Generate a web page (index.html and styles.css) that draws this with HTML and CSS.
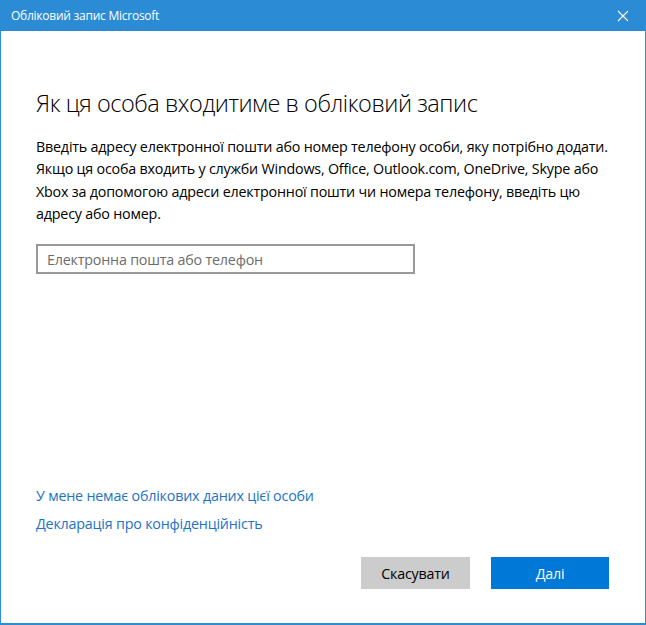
FILE: index.html
```html
<!DOCTYPE html>
<html lang="uk">
<head>
  <meta charset="UTF-8"/>
  <meta name="viewport" content="width=device-width, initial-scale=1.0"/>
  <title>Обліковий запис Microsoft</title>
  <link rel="stylesheet" href="styles.css">
</head>
<body>
  <div class="window">
    <div class="titlebar">
      <span class="title">Обліковий запис Microsoft</span>
      <button class="close" aria-label="Закрити">
        <svg width="12" height="12" viewBox="0 0 12 12">
          <path d="M1 1 L11 11 M11 1 L1 11" stroke="#fff" stroke-width="1.1" fill="none"/>
        </svg>
      </button>
    </div>

    <div class="content">
      <h1>Як ця особа входитиме в обліковий запис</h1>
      <p class="intro">
        Введіть адресу електронної пошти або номер телефону особи, яку потрібно додати.
        Якщо ця особа входить у служби Windows, Office, Outlook.com, OneDrive, Skype або
        Xbox за допомогою адреси електронної пошти чи номера телефону, введіть цю
        адресу або номер.
      </p>
      <input type="text" class="field" placeholder="Електронна пошта або телефон">

      <div class="links">
        <a href="#">У мене немає облікових даних цієї особи</a>
        <a href="#">Декларація про конфіденційність</a>
      </div>

      <div class="actions">
        <button class="btn btn-cancel">Скасувати</button>
        <button class="btn btn-next">Далі</button>
      </div>
    </div>
  </div>
</body>
</html>
```

FILE: styles.css
```css
* {
  box-sizing: border-box;
}

body {
  margin: 0;
  font-family: "Open Sans", "Noto Sans", sans-serif;
  background: #fff;
}

.window {
  width: 646px;
  height: 625px;
  display: flex;
  flex-direction: column;
  border: 1px solid #2b8dd6;
  border-top: none;
  border-bottom-width: 2px;
}

.titlebar {
  height: 31px;
  margin: 0 -1px;
  background: #2b8bd5;
  display: flex;
  align-items: center;
  justify-content: space-between;
  padding: 0 0 0 11px;
}

.title {
  color: #fff;
  font-size: 12px;
  letter-spacing: -0.25px;
}

.close {
  width: 46px;
  height: 31px;
  border: none;
  background: transparent;
  display: flex;
  align-items: center;
  justify-content: center;
  padding: 0;
}

.content {
  flex: 1;
  display: flex;
  flex-direction: column;
  padding: 56px 36px 34px 35px;
}

h1 {
  margin: 0;
  font-weight: 300;
  font-size: 23.5px;
  line-height: 32px;
  color: #000;
  letter-spacing: -0.45px;
}

.intro {
  margin: 17px 0 0;
  font-size: 14.3px;
  line-height: 22.3px;
  color: #000;
  letter-spacing: -0.2px;
}

.field {
  margin-top: 19px;
  width: 379px;
  height: 30px;
  border: 2px solid #999;
  padding: 0 9px;
  font-family: inherit;
  font-size: 14.3px;
  letter-spacing: -0.2px;
}

.field::placeholder {
  color: #6d6d6d;
}

.links {
  margin-top: auto;
  display: flex;
  flex-direction: column;
  gap: 6px;
}

.links a {
  color: #1d73c5;
  text-decoration: none;
  font-size: 14.3px;
  line-height: 22px;
  letter-spacing: -0.2px;
  align-self: flex-start;
}

.actions {
  margin-top: 22px;
  display: flex;
  justify-content: flex-end;
  gap: 21px;
}

.btn {
  height: 32px;
  border: none;
  font-family: inherit;
  font-size: 14.3px;
  letter-spacing: -0.2px;
  cursor: pointer;
}

.btn-cancel {
  width: 109px;
  background: #cccccc;
  color: #000;
}

.btn-next {
  width: 118px;
  background: #0078d7;
  color: #fff;
}
```
